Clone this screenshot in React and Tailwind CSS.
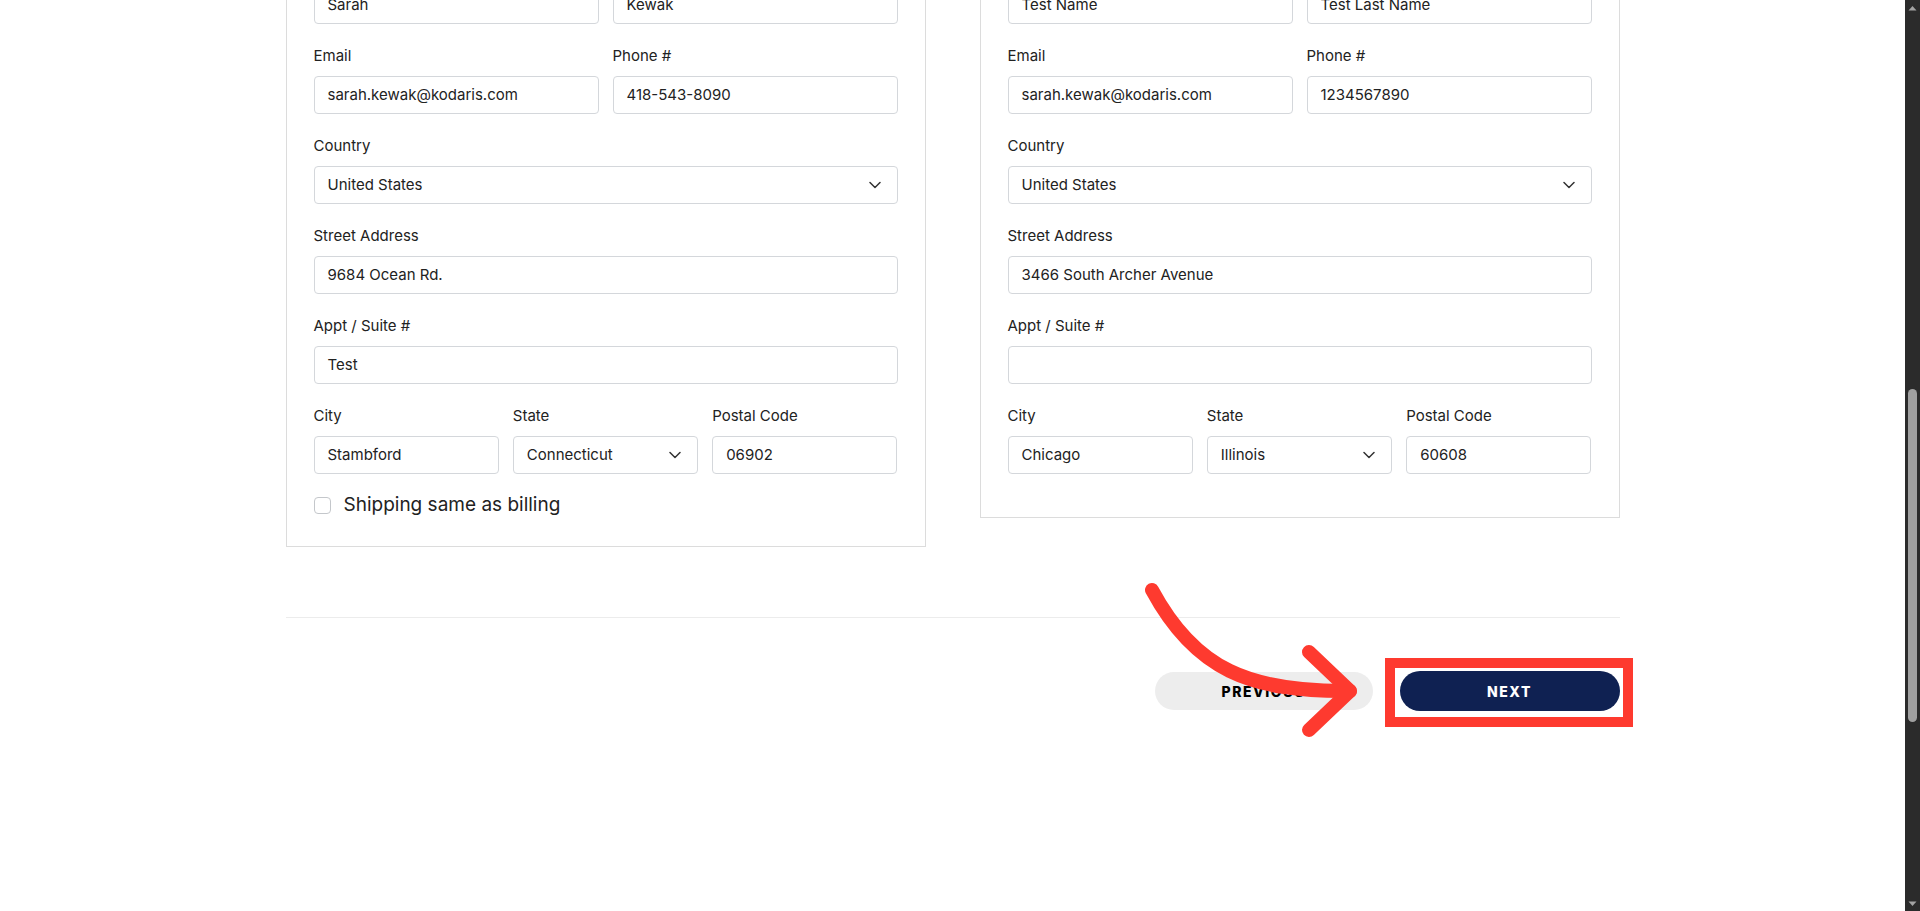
import React from "react";

function Chevron() {
  return (
    <svg width="12" height="8" viewBox="0 0 12 8" fill="none" className="shrink-0">
      <path d="M1 1.5l5 5 5-5" stroke="#333" strokeWidth="1.5" strokeLinecap="round" strokeLinejoin="round" />
    </svg>
  );
}

function Field({ label, value, select }) {
  return (
    <div className="mb-[22px]">
      <div className="h-[20px] leading-[20px] mb-[10px] text-[15px] text-[#222] whitespace-nowrap">{label}</div>
      <div
        className={
          select
            ? "h-[38px] border border-[#d4d7db] rounded-[4px] pl-[13px] pr-[16px] flex items-center justify-between text-[15px] text-[#222]"
            : "h-[38px] border border-[#d4d7db] rounded-[4px] px-[13px] flex items-center text-[15px] text-[#222]"
        }
      >
        <span className="whitespace-nowrap">{value}</span>
        {select && <Chevron />}
      </div>
    </div>
  );
}

function AddressCard({ data, showShipping }) {
  return (
    <div className="border border-[#dcdcdc] px-[27px] pt-[28px] pb-[21px]">
      <div className="grid grid-cols-2 gap-x-[14px]">
        <Field label="First Name" value={data.first} />
        <Field label="Last Name" value={data.last} />
        <Field label="Email" value={data.email} />
        <Field label="Phone #" value={data.phone} />
      </div>
      <Field label="Country" value="United States" select />
      <Field label="Street Address" value={data.street} />
      <Field label="Appt / Suite #" value={data.suite} />
      <div className="grid grid-cols-3 gap-x-[14px]">
        <Field label="City" value={data.city} />
        <Field label="State" value={data.state} select />
        <Field label="Postal Code" value={data.zip} />
      </div>
      {showShipping && (
        <div className="h-[18px] mb-[11px] flex items-center gap-[13px]">
          <span className="w-[17px] h-[17px] border border-[#c4c7cb] rounded-[4px] bg-white shrink-0" />
          <span className="text-[19px] text-[#222] whitespace-nowrap">Shipping same as billing</span>
        </div>
      )}
    </div>
  );
}

function Scrollbar() {
  return (
    <div className="w-[15px] h-[911px] bg-[#2b2b2b] flex flex-col items-center shrink-0">
      <svg width="9" height="6" viewBox="0 0 9 6" className="mt-[5px]">
        <path d="M0.5 5.5L4.5 1l4 4.5z" fill="#a3a3a3" />
      </svg>
      <div className="h-[378px]" />
      <div className="w-[9px] h-[333px] rounded-full bg-[#a0a0a0]" />
      <div className="flex-1" />
      <svg width="9" height="6" viewBox="0 0 9 6" className="mb-[4px]">
        <path d="M0.5 0.5L4.5 5l4-4.5z" fill="#a3a3a3" />
      </svg>
    </div>
  );
}

export default function App() {
  const billing = {
    first: "Sarah",
    last: "Kewak",
    email: "sarah.kewak@kodaris.com",
    phone: "418-543-8090",
    street: "9684 Ocean Rd.",
    suite: "Test",
    city: "Stambford",
    state: "Connecticut",
    zip: "06902",
  };
  const shipping = {
    first: "Test Name",
    last: "Test Last Name",
    email: "sarah.kewak@kodaris.com",
    phone: "1234567890",
    street: "3466 South Archer Avenue",
    suite: "",
    city: "Chicago",
    state: "Illinois",
    zip: "60608",
  };

  return (
    <div className="relative w-[1920px] h-[911px] overflow-hidden bg-white flex font-['Inter',sans-serif]">
      <div className="flex-1 h-full overflow-hidden">
        <div className="w-[1334px] mx-auto mt-[-73px]">
          <div className="grid grid-cols-2 gap-x-[54px] items-start">
            <AddressCard data={billing} showShipping />
            <AddressCard data={shipping} />
          </div>

          <div className="mt-[70px] h-px bg-[#ececec]" />

          <div className="mt-[53px] flex justify-end items-center gap-[27px]">
            <button className="w-[218px] h-[38px] rounded-full bg-[#ededed] text-black text-[14px] font-extrabold tracking-[1.5px]">
              PREVIOUS
            </button>
            <button className="w-[220px] h-[40px] rounded-full bg-[#0f2152] text-white text-[14px] font-extrabold tracking-[1.5px]">
              NEXT
            </button>
          </div>
        </div>
      </div>

      <Scrollbar />

      {/* annotation overlay */}
      <svg className="absolute inset-0 pointer-events-none" width="1920" height="911" viewBox="0 0 1920 911" fill="none">
        <rect x="1390" y="663" width="238" height="59" stroke="#fe3a2f" strokeWidth="10" />
        <path d="M1152 590 C1195 670, 1250 692, 1350 691" stroke="#fe3a2f" strokeWidth="14" strokeLinecap="round" />
        <path d="M1309 652 L1350 691 L1309 730" stroke="#fe3a2f" strokeWidth="14" strokeLinecap="round" strokeLinejoin="round" />
      </svg>
    </div>
  );
}
